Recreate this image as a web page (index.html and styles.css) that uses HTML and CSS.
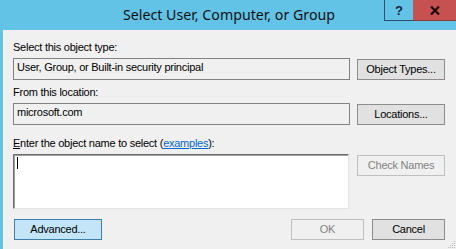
FILE: index.html
```html
<!DOCTYPE html>
<html>
<head>
<meta charset="utf-8">
<link rel="stylesheet" href="styles.css">
</head>
<body>
<div class="window">
  <div class="titlebar">
    <div class="title">Select User, Computer, or Group</div>
    <div class="caption-btns">
      <div class="cbtn help">?</div>
      <div class="cbtn close">
        <svg width="10" height="9" viewBox="0 0 10 9"><path d="M1 0.5 L9 8.5 M9 0.5 L1 8.5" stroke="#1a0a0a" stroke-width="2.2" fill="none"/></svg>
      </div>
    </div>
  </div>
  <div class="client">
    <div class="field">
      <div class="label">Select this object type:</div>
      <div class="row">
        <div class="box">User, Group, or Built-in security principal</div>
        <button class="btn">Object Types...</button>
      </div>
    </div>
    <div class="field second">
      <div class="label">From this location:</div>
      <div class="row">
        <div class="box">microsoft.com</div>
        <button class="btn">Locations...</button>
      </div>
    </div>
    <div class="field third">
      <div class="label"><u>E</u>nter the object name to select (<a class="link">examples</a>):</div>
      <div class="row top">
        <div class="textarea"><span class="caret"></span></div>
        <button class="btn disabled">Check Names</button>
      </div>
    </div>
    <div class="footer">
      <button class="btn adv">Advanced...</button>
      <div class="spacer"></div>
      <button class="btn small disabled">OK</button>
      <button class="btn small">Cancel</button>
    </div>
    <svg class="grip" width="10" height="10" viewBox="0 0 10 10">
      <rect x="8" y="2" width="1" height="1" fill="#b8b8b8"/>
      <rect x="6" y="4" width="1" height="1" fill="#b8b8b8"/>
      <rect x="8" y="4" width="1" height="1" fill="#b8b8b8"/>
      <rect x="4" y="6" width="1" height="1" fill="#b8b8b8"/>
      <rect x="6" y="6" width="1" height="1" fill="#b8b8b8"/>
      <rect x="8" y="6" width="1" height="1" fill="#b8b8b8"/>
      <rect x="2" y="8" width="1" height="1" fill="#b8b8b8"/>
      <rect x="4" y="8" width="1" height="1" fill="#b8b8b8"/>
      <rect x="6" y="8" width="1" height="1" fill="#b8b8b8"/>
      <rect x="8" y="8" width="1" height="1" fill="#b8b8b8"/>
    </svg>
  </div>
</div>
</body>
</html>
```

FILE: styles.css
```css
* { box-sizing: border-box; }
html, body { margin: 0; padding: 0; }
body {
  width: 456px;
  height: 249px;
  overflow: hidden;
  background: #f0f0f0;
  font-family: "Liberation Sans", Arial, sans-serif;
  font-size: 11px;
  letter-spacing: -0.25px;
  color: #000;
}
.window {
  width: 456px;
  height: 249px;
  display: flex;
  flex-direction: column;
}
.titlebar {
  height: 30px;
  background: #63c3e7;
  display: grid;
  flex: none;
}
.title {
  grid-area: 1 / 1;
  justify-self: center;
  align-self: center;
  font-family: "Noto Sans", "Open Sans", sans-serif;
  font-size: 14.2px;
  letter-spacing: 0;
  color: #111;
  margin-left: 2px;
  margin-top: -1px;
}
.caption-btns {
  grid-area: 1 / 1;
  justify-self: end;
  align-self: start;
  display: flex;
}
.cbtn {
  height: 21px;
  display: flex;
  align-items: center;
  justify-content: center;
  border-bottom: 1px solid #2f4f6f;
}
.help {
  width: 29px;
  border-left: 1px solid #2f4f6f;
  font-family: "Liberation Sans", Arial, sans-serif;
  font-weight: bold;
  font-size: 13px;
  letter-spacing: 0;
  color: #14243e;
  padding-top: 1px;
}
.close {
  width: 43px;
  background: #c75050;
  border-bottom-color: #8a3a3a;
}
.client {
  flex: 1;
  position: relative;
  border-left: 3px solid #63c3e7;
  box-shadow: inset 1px 0 0 #f8f8f8;
  padding: 11px 11px 0 10px;
  display: flex;
  flex-direction: column;
}
.label {
  height: 13px;
  line-height: 13px;
  margin-bottom: 4px;
  white-space: nowrap;
}
.field.second { margin-top: 6px; }
.field.third { margin-top: 12px; }
.row {
  display: flex;
  align-items: flex-end;
  gap: 7px;
}
.row.top { align-items: flex-start; gap: 8px; }
.box {
  width: 337px;
  height: 22px;
  border: 1px solid #828282;
  background: #f0f0f0;
  padding: 2px 2px 0 3px;
  line-height: 13px;
  white-space: nowrap;
}
.btn {
  width: 88px;
  height: 21px;
  border: 1px solid #8c8c8c;
  background: #e1e1e1;
  font-family: "Liberation Sans", Arial, sans-serif;
  font-size: 11px;
  letter-spacing: -0.25px;
  color: #000;
  padding: 0;
  margin: 0;
  line-height: 13px;
}
.btn.disabled {
  border-color: #bfbfbf;
  background: #f0f0f0;
  color: #838383;
}
.row.top .btn { margin-top: 1px; }
.textarea {
  width: 336px;
  height: 55px;
  background: #fff;
  border-top: 1px solid #6d6d6d;
  border-left: 1px solid #6d6d6d;
  border-right: 1px solid #e3e3e3;
  border-bottom: 1px solid #e3e3e3;
  box-shadow: inset 1px 1px 0 #a0a0a0;
  padding: 2px 0 0 3px;
}
.caret {
  display: block;
  width: 1px;
  height: 12px;
  background: #000;
}
.link {
  color: #0066cc;
  text-decoration: underline;
}
.footer {
  margin-top: 10px;
  display: flex;
  gap: 8px;
}
.spacer { flex: 1; }
.adv {
  margin-left: 1px;
  background: #c4e5f8;
  border-color: #3c7fb1;
}
.btn.small { width: 73px; }
.grip {
  position: absolute;
  right: 0;
  bottom: 0;
}
```
